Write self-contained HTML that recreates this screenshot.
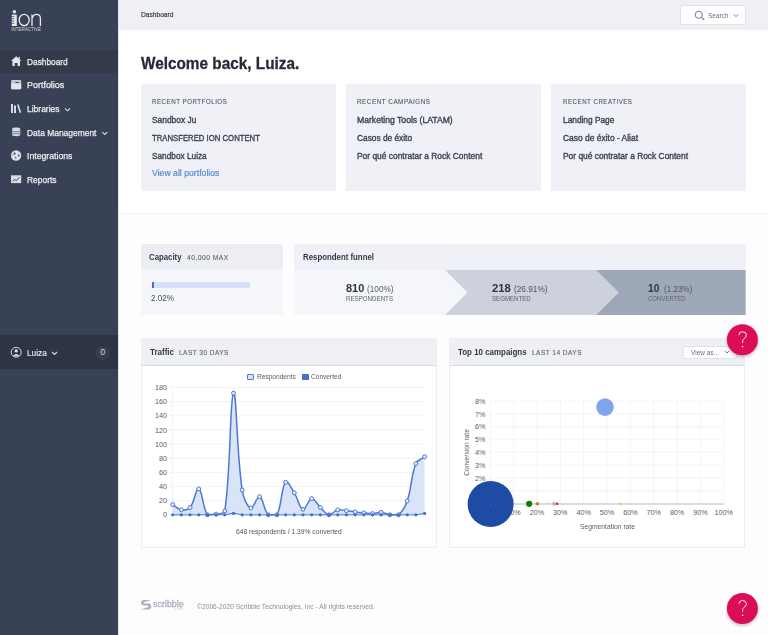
<!DOCTYPE html>
<html><head><meta charset="utf-8">
<style>
html,body{margin:0;padding:0;width:768px;height:635px;overflow:hidden;background:#fdfdfd;font-family:"Liberation Sans",sans-serif;}
.a{position:absolute;}
.t{position:absolute;white-space:nowrap;transform-origin:0 0;font-family:"Liberation Sans",sans-serif;}
svg{position:absolute;left:0;top:0;}
</style></head><body>
<!-- backgrounds -->
<div class="a" style="left:0;top:0;width:118px;height:635px;background:#384155"></div>
<div class="a" style="left:0;top:50px;width:118px;height:23px;background:#333b4b"></div>
<div class="a" style="left:0;top:335px;width:118px;height:34px;background:#2d3443"></div>
<div class="a" style="left:118px;top:0;width:1px;height:635px;background:#e3e5ea"></div>
<div class="a" style="left:119px;top:0;width:649px;height:30px;background:#eff0f4"></div>
<div class="a" style="left:119px;top:30px;width:649px;height:183px;background:#ffffff"></div>
<div class="a" style="left:119px;top:213px;width:649px;height:1px;background:#f3f4f7"></div>
<!-- search button -->
<div class="a" style="left:679.5px;top:5px;width:64.5px;height:18px;background:#fff;border:1px solid #dfe2e8;border-radius:2px"></div>
<!-- welcome cards -->
<div class="a" style="left:141px;top:84px;width:194.7px;height:107px;background:#f0f1f6"></div>
<div class="a" style="left:346px;top:84px;width:194.7px;height:107px;background:#f0f1f6"></div>
<div class="a" style="left:551px;top:84px;width:194.7px;height:107px;background:#f0f1f6"></div>
<!-- capacity -->
<div class="a" style="left:141px;top:244px;width:142px;height:26px;background:#eceef4"></div>
<div class="a" style="left:141px;top:270px;width:142px;height:45px;background:#f4f6f9"></div>
<div class="a" style="left:151.5px;top:282.2px;width:98.5px;height:5.8px;background:#d6e1f8"></div>
<div class="a" style="left:151.5px;top:282.2px;width:2.3px;height:5.8px;background:#4670cb"></div>
<!-- funnel -->
<div class="a" style="left:294.3px;top:244px;width:451.4px;height:26px;background:#f0f1f6"></div>
<svg width="768" height="635" viewBox="0 0 768 635">
<polygon points="294.3,270 445,270 467.5,292.5 445,315 294.3,315" fill="#f4f6f9"/>
<polygon points="445,270 596,270 618.5,292.5 596,315 445,315 467.5,292.5" fill="#ccd1dc"/>
<polygon points="596,270 745.7,270 745.7,315 596,315 618.5,292.5" fill="#9fa8b9"/>
</svg>
<!-- chart cards -->
<div class="a" style="left:140.6px;top:338px;width:294.2px;height:208.4px;border:1px solid #eceef2;background:#fff"></div>
<div class="a" style="left:140.6px;top:338px;width:296.2px;height:27px;background:#eef0f5;border-bottom:1px solid #d9dde6"></div>
<div class="a" style="left:448.6px;top:338px;width:294.4px;height:208.4px;border:1px solid #eceef2;background:#fff"></div>
<div class="a" style="left:448.6px;top:338px;width:296.4px;height:27px;background:#eef0f5;border-bottom:1px solid #d9dde6"></div>
<div class="a" style="left:683.4px;top:345.5px;width:52px;height:11px;background:#fff;border:1px solid #dfe2e8;border-radius:2px"></div>
<!-- legend boxes -->
<div class="a" style="left:247.2px;top:373.9px;width:4.8px;height:4.4px;border:1px solid #5079d0;background:#d8e3f8;border-radius:1px"></div>
<div class="a" style="left:302.3px;top:373.9px;width:6.5px;height:6.4px;background:#4a72c8"></div>
<svg width="768" height="635" viewBox="0 0 768 635">
<line x1="168.5" y1="387.50" x2="425.6" y2="387.50" stroke="#eef0f4" stroke-width="0.8"/>
<line x1="168.5" y1="401.65" x2="425.6" y2="401.65" stroke="#eef0f4" stroke-width="0.8"/>
<line x1="168.5" y1="415.80" x2="425.6" y2="415.80" stroke="#eef0f4" stroke-width="0.8"/>
<line x1="168.5" y1="429.95" x2="425.6" y2="429.95" stroke="#eef0f4" stroke-width="0.8"/>
<line x1="168.5" y1="444.10" x2="425.6" y2="444.10" stroke="#eef0f4" stroke-width="0.8"/>
<line x1="168.5" y1="458.25" x2="425.6" y2="458.25" stroke="#eef0f4" stroke-width="0.8"/>
<line x1="168.5" y1="472.40" x2="425.6" y2="472.40" stroke="#eef0f4" stroke-width="0.8"/>
<line x1="168.5" y1="486.55" x2="425.6" y2="486.55" stroke="#eef0f4" stroke-width="0.8"/>
<line x1="168.5" y1="500.70" x2="425.6" y2="500.70" stroke="#eef0f4" stroke-width="0.8"/>
<line x1="168.5" y1="514.85" x2="425.6" y2="514.85" stroke="#eef0f4" stroke-width="0.8"/>
<line x1="172.5" y1="385" x2="172.5" y2="514.8" stroke="#eef0f4" stroke-width="0.8"/>
<path d="M172.70,504.54 C176.17,506.66 177.70,509.23 181.39,509.85 C184.65,510.39 187.95,510.00 190.07,507.44 C194.90,501.63 195.78,487.64 198.76,488.91 C202.73,490.59 202.18,507.16 207.44,514.80 C209.13,514.80 212.76,514.80 216.13,514.09 C219.71,513.29 224.31,514.42 224.82,510.91 C231.26,466.03 229.69,397.69 233.50,393.11 C236.64,389.34 236.42,451.90 242.19,490.04 C243.37,497.86 246.82,506.46 250.88,508.01 C253.77,509.12 256.68,495.56 259.56,496.69 C263.63,498.28 263.40,509.74 268.25,514.80 C270.35,514.80 275.51,514.80 276.93,514.80 C282.46,504.45 280.68,488.49 285.62,482.25 C287.63,479.72 291.36,488.27 294.31,492.87 C298.31,499.11 299.00,508.02 302.99,509.35 C305.95,510.34 308.02,499.07 311.68,498.67 C314.96,498.31 316.75,504.09 320.37,507.44 C323.70,510.54 325.35,514.29 329.05,514.80 C332.30,514.80 334.03,510.72 337.74,509.85 C340.98,509.08 342.96,510.27 346.42,510.70 C349.91,511.12 351.63,511.53 355.11,511.97 C358.58,512.41 360.32,512.56 363.80,512.89 C367.27,513.21 369.02,513.71 372.48,513.60 C375.97,513.48 377.74,512.09 381.17,512.32 C384.69,512.57 386.31,514.30 389.86,514.80 C393.26,514.80 396.13,514.80 398.54,514.80 C403.08,511.18 405.15,507.06 407.23,500.93 C412.10,486.57 410.52,477.29 415.91,463.58 C417.47,459.63 421.13,459.50 424.60,456.78 L424.60,514.8 L172.70,514.8 Z" fill="#d5e1f8" fill-opacity="0.9"/>
<path d="M172.70,504.54 C176.17,506.66 177.70,509.23 181.39,509.85 C184.65,510.39 187.95,510.00 190.07,507.44 C194.90,501.63 195.78,487.64 198.76,488.91 C202.73,490.59 202.18,507.16 207.44,514.80 C209.13,514.80 212.76,514.80 216.13,514.09 C219.71,513.29 224.31,514.42 224.82,510.91 C231.26,466.03 229.69,397.69 233.50,393.11 C236.64,389.34 236.42,451.90 242.19,490.04 C243.37,497.86 246.82,506.46 250.88,508.01 C253.77,509.12 256.68,495.56 259.56,496.69 C263.63,498.28 263.40,509.74 268.25,514.80 C270.35,514.80 275.51,514.80 276.93,514.80 C282.46,504.45 280.68,488.49 285.62,482.25 C287.63,479.72 291.36,488.27 294.31,492.87 C298.31,499.11 299.00,508.02 302.99,509.35 C305.95,510.34 308.02,499.07 311.68,498.67 C314.96,498.31 316.75,504.09 320.37,507.44 C323.70,510.54 325.35,514.29 329.05,514.80 C332.30,514.80 334.03,510.72 337.74,509.85 C340.98,509.08 342.96,510.27 346.42,510.70 C349.91,511.12 351.63,511.53 355.11,511.97 C358.58,512.41 360.32,512.56 363.80,512.89 C367.27,513.21 369.02,513.71 372.48,513.60 C375.97,513.48 377.74,512.09 381.17,512.32 C384.69,512.57 386.31,514.30 389.86,514.80 C393.26,514.80 396.13,514.80 398.54,514.80 C403.08,511.18 405.15,507.06 407.23,500.93 C412.10,486.57 410.52,477.29 415.91,463.58 C417.47,459.63 421.13,459.50 424.60,456.78" fill="none" stroke="#4d78d2" stroke-width="1.5"/>
<circle cx="172.70" cy="504.54" r="1.95" fill="#e6edfb" stroke="#4d78d2" stroke-width="1"/>
<circle cx="181.39" cy="509.85" r="1.95" fill="#e6edfb" stroke="#4d78d2" stroke-width="1"/>
<circle cx="190.07" cy="507.44" r="1.95" fill="#e6edfb" stroke="#4d78d2" stroke-width="1"/>
<circle cx="198.76" cy="488.91" r="1.95" fill="#e6edfb" stroke="#4d78d2" stroke-width="1"/>
<circle cx="207.44" cy="514.80" r="1.95" fill="#e6edfb" stroke="#4d78d2" stroke-width="1"/>
<circle cx="216.13" cy="514.09" r="1.95" fill="#e6edfb" stroke="#4d78d2" stroke-width="1"/>
<circle cx="224.82" cy="510.91" r="1.95" fill="#e6edfb" stroke="#4d78d2" stroke-width="1"/>
<circle cx="233.50" cy="393.11" r="1.95" fill="#e6edfb" stroke="#4d78d2" stroke-width="1"/>
<circle cx="242.19" cy="490.04" r="1.95" fill="#e6edfb" stroke="#4d78d2" stroke-width="1"/>
<circle cx="250.88" cy="508.01" r="1.95" fill="#e6edfb" stroke="#4d78d2" stroke-width="1"/>
<circle cx="259.56" cy="496.69" r="1.95" fill="#e6edfb" stroke="#4d78d2" stroke-width="1"/>
<circle cx="268.25" cy="514.80" r="1.95" fill="#e6edfb" stroke="#4d78d2" stroke-width="1"/>
<circle cx="276.93" cy="514.80" r="1.95" fill="#e6edfb" stroke="#4d78d2" stroke-width="1"/>
<circle cx="285.62" cy="482.25" r="1.95" fill="#e6edfb" stroke="#4d78d2" stroke-width="1"/>
<circle cx="294.31" cy="492.87" r="1.95" fill="#e6edfb" stroke="#4d78d2" stroke-width="1"/>
<circle cx="302.99" cy="509.35" r="1.95" fill="#e6edfb" stroke="#4d78d2" stroke-width="1"/>
<circle cx="311.68" cy="498.67" r="1.95" fill="#e6edfb" stroke="#4d78d2" stroke-width="1"/>
<circle cx="320.37" cy="507.44" r="1.95" fill="#e6edfb" stroke="#4d78d2" stroke-width="1"/>
<circle cx="329.05" cy="514.80" r="1.95" fill="#e6edfb" stroke="#4d78d2" stroke-width="1"/>
<circle cx="337.74" cy="509.85" r="1.95" fill="#e6edfb" stroke="#4d78d2" stroke-width="1"/>
<circle cx="346.42" cy="510.70" r="1.95" fill="#e6edfb" stroke="#4d78d2" stroke-width="1"/>
<circle cx="355.11" cy="511.97" r="1.95" fill="#e6edfb" stroke="#4d78d2" stroke-width="1"/>
<circle cx="363.80" cy="512.89" r="1.95" fill="#e6edfb" stroke="#4d78d2" stroke-width="1"/>
<circle cx="372.48" cy="513.60" r="1.95" fill="#e6edfb" stroke="#4d78d2" stroke-width="1"/>
<circle cx="381.17" cy="512.32" r="1.95" fill="#e6edfb" stroke="#4d78d2" stroke-width="1"/>
<circle cx="389.86" cy="514.80" r="1.95" fill="#e6edfb" stroke="#4d78d2" stroke-width="1"/>
<circle cx="398.54" cy="514.80" r="1.95" fill="#e6edfb" stroke="#4d78d2" stroke-width="1"/>
<circle cx="407.23" cy="500.93" r="1.95" fill="#e6edfb" stroke="#4d78d2" stroke-width="1"/>
<circle cx="415.91" cy="463.58" r="1.95" fill="#e6edfb" stroke="#4d78d2" stroke-width="1"/>
<circle cx="424.60" cy="456.78" r="1.95" fill="#e6edfb" stroke="#4d78d2" stroke-width="1"/>
<path d="M172.70,514.80 C176.17,514.80 177.91,514.80 181.39,514.80 C184.86,514.80 186.60,514.80 190.07,514.80 C193.55,514.80 195.28,514.80 198.76,514.80 C202.23,514.80 203.97,514.80 207.44,514.80 C210.92,514.80 212.66,514.80 216.13,514.80 C219.61,514.80 221.37,514.80 224.82,514.80 C228.31,514.52 230.03,513.38 233.50,513.38 C236.98,513.38 238.69,514.52 242.19,514.80 C245.64,514.80 247.40,514.80 250.88,514.80 C254.35,514.80 256.09,514.80 259.56,514.80 C263.04,514.80 264.77,514.80 268.25,514.80 C271.72,514.80 273.46,514.80 276.93,514.80 C280.41,514.80 282.15,514.80 285.62,514.80 C289.10,514.80 290.83,514.80 294.31,514.80 C297.78,514.80 299.52,514.80 302.99,514.80 C306.47,514.80 308.20,514.80 311.68,514.80 C315.15,514.80 316.89,514.80 320.37,514.80 C323.84,514.80 325.58,514.80 329.05,514.80 C332.53,514.80 334.26,514.80 337.74,514.80 C341.21,514.80 342.95,514.80 346.42,514.80 C349.90,514.80 351.64,514.80 355.11,514.80 C358.58,514.80 360.32,514.80 363.80,514.80 C367.27,514.80 369.01,514.80 372.48,514.80 C375.96,514.80 377.69,514.80 381.17,514.80 C384.64,514.80 386.38,514.80 389.86,514.80 C393.33,514.80 395.07,514.80 398.54,514.80 C402.02,514.80 403.75,514.80 407.23,514.80 C410.70,514.80 412.46,514.80 415.91,514.80 C419.41,514.52 421.13,513.95 424.60,513.38" fill="none" stroke="#4a74cf" stroke-width="1"/>
<circle cx="172.70" cy="514.80" r="1.65" fill="#4570cc"/>
<circle cx="181.39" cy="514.80" r="1.65" fill="#4570cc"/>
<circle cx="190.07" cy="514.80" r="1.65" fill="#4570cc"/>
<circle cx="198.76" cy="514.80" r="1.65" fill="#4570cc"/>
<circle cx="207.44" cy="514.80" r="1.65" fill="#4570cc"/>
<circle cx="216.13" cy="514.80" r="1.65" fill="#4570cc"/>
<circle cx="224.82" cy="514.80" r="1.65" fill="#4570cc"/>
<circle cx="233.50" cy="513.38" r="1.65" fill="#4570cc"/>
<circle cx="242.19" cy="514.80" r="1.65" fill="#4570cc"/>
<circle cx="250.88" cy="514.80" r="1.65" fill="#4570cc"/>
<circle cx="259.56" cy="514.80" r="1.65" fill="#4570cc"/>
<circle cx="268.25" cy="514.80" r="1.65" fill="#4570cc"/>
<circle cx="276.93" cy="514.80" r="1.65" fill="#4570cc"/>
<circle cx="285.62" cy="514.80" r="1.65" fill="#4570cc"/>
<circle cx="294.31" cy="514.80" r="1.65" fill="#4570cc"/>
<circle cx="302.99" cy="514.80" r="1.65" fill="#4570cc"/>
<circle cx="311.68" cy="514.80" r="1.65" fill="#4570cc"/>
<circle cx="320.37" cy="514.80" r="1.65" fill="#4570cc"/>
<circle cx="329.05" cy="514.80" r="1.65" fill="#4570cc"/>
<circle cx="337.74" cy="514.80" r="1.65" fill="#4570cc"/>
<circle cx="346.42" cy="514.80" r="1.65" fill="#4570cc"/>
<circle cx="355.11" cy="514.80" r="1.65" fill="#4570cc"/>
<circle cx="363.80" cy="514.80" r="1.65" fill="#4570cc"/>
<circle cx="372.48" cy="514.80" r="1.65" fill="#4570cc"/>
<circle cx="381.17" cy="514.80" r="1.65" fill="#4570cc"/>
<circle cx="389.86" cy="514.80" r="1.65" fill="#4570cc"/>
<circle cx="398.54" cy="514.80" r="1.65" fill="#4570cc"/>
<circle cx="407.23" cy="514.80" r="1.65" fill="#4570cc"/>
<circle cx="415.91" cy="514.80" r="1.65" fill="#4570cc"/>
<circle cx="424.60" cy="513.38" r="1.65" fill="#4570cc"/>
<line x1="490.20" y1="490.80" x2="723.8" y2="490.80" stroke="#eef1f7" stroke-width="0.8"/>
<line x1="490.20" y1="478.00" x2="723.8" y2="478.00" stroke="#eef1f7" stroke-width="0.8"/>
<line x1="490.20" y1="465.20" x2="723.8" y2="465.20" stroke="#eef1f7" stroke-width="0.8"/>
<line x1="490.20" y1="452.40" x2="723.8" y2="452.40" stroke="#eef1f7" stroke-width="0.8"/>
<line x1="490.20" y1="439.60" x2="723.8" y2="439.60" stroke="#eef1f7" stroke-width="0.8"/>
<line x1="490.20" y1="426.80" x2="723.8" y2="426.80" stroke="#eef1f7" stroke-width="0.8"/>
<line x1="490.20" y1="414.00" x2="723.8" y2="414.00" stroke="#eef1f7" stroke-width="0.8"/>
<line x1="490.20" y1="401.20" x2="723.8" y2="401.20" stroke="#eef1f7" stroke-width="0.8"/>
<line x1="490.20" y1="401" x2="490.20" y2="503.6" stroke="#eef1f7" stroke-width="0.8"/>
<line x1="513.56" y1="401" x2="513.56" y2="503.6" stroke="#eef1f7" stroke-width="0.8"/>
<line x1="536.92" y1="401" x2="536.92" y2="503.6" stroke="#eef1f7" stroke-width="0.8"/>
<line x1="560.28" y1="401" x2="560.28" y2="503.6" stroke="#eef1f7" stroke-width="0.8"/>
<line x1="583.64" y1="401" x2="583.64" y2="503.6" stroke="#eef1f7" stroke-width="0.8"/>
<line x1="607.00" y1="401" x2="607.00" y2="503.6" stroke="#eef1f7" stroke-width="0.8"/>
<line x1="630.36" y1="401" x2="630.36" y2="503.6" stroke="#eef1f7" stroke-width="0.8"/>
<line x1="653.72" y1="401" x2="653.72" y2="503.6" stroke="#eef1f7" stroke-width="0.8"/>
<line x1="677.08" y1="401" x2="677.08" y2="503.6" stroke="#eef1f7" stroke-width="0.8"/>
<line x1="700.44" y1="401" x2="700.44" y2="503.6" stroke="#eef1f7" stroke-width="0.8"/>
<line x1="723.80" y1="401" x2="723.80" y2="503.6" stroke="#eef1f7" stroke-width="0.8"/>
<line x1="490.2" y1="504.0" x2="723.8" y2="504.0" stroke="#b4bac6" stroke-width="1"/>
<!-- search icon & chevrons -->
<circle cx="698.8" cy="14.8" r="3.6" fill="none" stroke="#6f7890" stroke-width="1"/>
<line x1="701.4" y1="17.4" x2="704.2" y2="20.2" stroke="#6f7890" stroke-width="1.1"/>
<polyline points="733.5,14.2 736,16.6 738.5,14.2" fill="none" stroke="#6f7890" stroke-width="0.9"/>
<polyline points="724.8,350.8 727,353 729.2,350.8" fill="none" stroke="#6b707b" stroke-width="0.9"/>
<!-- sidebar chevrons -->
<polyline points="65,108.4 67.5,110.8 70,108.4" fill="none" stroke="#d9dce3" stroke-width="1.15"/>
<polyline points="102.3,132.1 104.8,134.5 107.3,132.1" fill="none" stroke="#d9dce3" stroke-width="1.15"/>
<polyline points="52,352 54.5,354.5 57,352" fill="none" stroke="#d9dce3" stroke-width="1.15"/>
<!-- badge -->
<circle cx="102.5" cy="353" r="7" fill="#373f4f"/>
<!-- user icon -->
<circle cx="16.2" cy="352.3" r="5" fill="none" stroke="#d9dce2" stroke-width="1"/>
<circle cx="16.2" cy="350.9" r="1.7" fill="#d9dce2"/>
<path d="M13.2,355.6 Q16.2,352.4 19.2,355.6 L18.6,356.3 L13.8,356.3 Z" fill="#d9dce2"/>
<!-- nav icons -->
<path d="M16.2,56.2 L21.3,61 L20,61 L20,66 L17.6,66 L17.6,63 L14.8,63 L14.8,66 L12.4,66 L12.4,61 L11,61 Z" fill="#e2e5ea"/>
<rect x="18.6" y="56.8" width="1.3" height="2.6" fill="#e2e5ea"/>
<path d="M12.2,80 L20.2,80 Q21.2,80 21.2,81 L21.2,88.2 Q21.2,89.3 20.2,89.3 L12.2,89.3 Q11.1,89.3 11.1,88.2 L11.1,81 Q11.1,80 12.2,80 Z" fill="#c3c8d0"/>
<ellipse cx="17.2" cy="82.5" rx="2.2" ry="0.6" fill="#384155"/>
<path d="M11.1,83.4 L21.2,83.8 L21.2,88.2 Q21.2,89.3 20.2,89.3 L12.2,89.3 Q11.1,89.3 11.1,88.2 Z" fill="#e1e4e9"/>
<rect x="11" y="104" width="2" height="9" fill="#d9dce2"/>
<rect x="14" y="105.5" width="2" height="7.5" fill="#d9dce2"/>
<path d="M17,104.8 L18.6,104.3 L21.3,112.4 L19.7,113 Z" fill="#d9dce2"/>
<ellipse cx="16.2" cy="128.8" rx="4.1" ry="1.3" fill="#d9dce2"/>
<path d="M12.1,129.6 L20.3,129.6 L20.3,135.2 Q16.2,137.4 12.1,135.2 Z" fill="#d9dce2"/>
<line x1="12.1" y1="131.6" x2="20.3" y2="131.6" stroke="#384155" stroke-width="0.6"/>
<line x1="12.1" y1="133.7" x2="20.3" y2="133.7" stroke="#384155" stroke-width="0.6"/>
<circle cx="16.05" cy="155.5" r="5.2" fill="#dfe2e8"/>
<circle cx="14.6" cy="153.6" r="1.1" fill="#4a5365"/>
<circle cx="18.8" cy="155.4" r="1" fill="#4a5365"/>
<circle cx="15.6" cy="157.6" r="0.9" fill="#5a6375"/>
<path d="M11.3,155 L13.6,155" stroke="#5a6375" stroke-width="0.6"/>
<rect x="11" y="175.3" width="10.2" height="7.8" fill="#d9dce2"/>
<polyline points="12.6,181.4 14.6,179.6 16.4,180.6 19.4,177.2" fill="none" stroke="#384155" stroke-width="0.9"/>
<!-- logo -->
<circle cx="14.4" cy="11.8" r="1.8" fill="#e8eaee"/>
<rect x="11.8" y="14.6" width="5" height="11.4" fill="#e8eaee"/>
<rect x="11.8" y="16.2" width="2.6" height="0.7" fill="#384155"/>
<rect x="11.8" y="18.4" width="2.6" height="0.7" fill="#384155"/>
<rect x="11.8" y="20.6" width="2.6" height="0.7" fill="#384155"/>
<rect x="11.8" y="22.8" width="2.6" height="0.7" fill="#384155"/>
<ellipse cx="24.2" cy="20" rx="5" ry="5.6" fill="none" stroke="#e8eaee" stroke-width="1.3"/>
<path d="M32,26 L32,14.4 M32,18.6 Q33.2,14.3 36.6,14.3 Q40.4,14.3 40.4,18.6 L40.4,26" fill="none" stroke="#e8eaee" stroke-width="1.3"/>
<text x="11.3" y="31" font-family="Liberation Sans" font-size="4.6" fill="#d0d4dc" textLength="29.7" lengthAdjust="spacingAndGlyphs">INTERACTIVE</text>
</svg>
<span class="t" style="left:26.50px;top:57.80px;font-size:9.2px;line-height:9.2px;color:#eef0f4;transform:scaleX(0.905);-webkit-text-stroke:0.25px #eef0f4;">Dashboard</span>
<span class="t" style="left:26.50px;top:81.40px;font-size:9.2px;line-height:9.2px;color:#eef0f4;transform:scaleX(0.974);-webkit-text-stroke:0.25px #eef0f4;">Portfolios</span>
<span class="t" style="left:26.50px;top:105.00px;font-size:9.2px;line-height:9.2px;color:#eef0f4;transform:scaleX(0.922);-webkit-text-stroke:0.25px #eef0f4;">Libraries</span>
<span class="t" style="left:26.50px;top:128.60px;font-size:9.2px;line-height:9.2px;color:#eef0f4;transform:scaleX(0.919);-webkit-text-stroke:0.25px #eef0f4;">Data Management</span>
<span class="t" style="left:26.50px;top:152.20px;font-size:9.2px;line-height:9.2px;color:#eef0f4;transform:scaleX(0.946);-webkit-text-stroke:0.25px #eef0f4;">Integrations</span>
<span class="t" style="left:26.50px;top:175.80px;font-size:9.2px;line-height:9.2px;color:#eef0f4;transform:scaleX(0.917);-webkit-text-stroke:0.25px #eef0f4;">Reports</span>
<span class="t" style="left:26.60px;top:348.80px;font-size:9.2px;line-height:9.2px;color:#eef0f4;transform:scaleX(0.901);-webkit-text-stroke:0.12px #eef0f4;">Luiza</span>
<span class="t" style="left:100.30px;top:348.20px;font-size:8.8px;line-height:8.8px;color:#d3d8e0;">0</span>
<span class="t" style="left:140.70px;top:11.40px;font-size:7.4px;line-height:7.4px;color:#353942;transform:scaleX(0.896);-webkit-text-stroke:0.2px #353942;">Dashboard</span>
<span class="t" style="left:707.60px;top:11.60px;font-size:7.6px;line-height:7.6px;color:#676c77;transform:scaleX(0.848);">Search</span>
<span class="t" style="left:140.70px;top:55.50px;font-size:16.6px;line-height:16.6px;color:#262b37;font-weight:bold;transform:scaleX(0.924);-webkit-text-stroke:0.3px #262b37;">Welcome back, Luiza.</span>
<span class="t" style="left:151.80px;top:98.10px;font-size:7.3px;line-height:7.3px;color:#4f5461;letter-spacing:0.6px;transform:scaleX(0.846);-webkit-text-stroke:0.1px #4f5461;">RECENT PORTFOLIOS</span>
<span class="t" style="left:151.80px;top:115.70px;font-size:9.0px;line-height:9.0px;color:#3b404c;transform:scaleX(0.932);-webkit-text-stroke:0.35px #3b404c;">Sandbox Ju</span>
<span class="t" style="left:151.80px;top:133.70px;font-size:9.0px;line-height:9.0px;color:#3b404c;transform:scaleX(0.860);-webkit-text-stroke:0.35px #3b404c;">TRANSFERED ION CONTENT</span>
<span class="t" style="left:151.80px;top:151.70px;font-size:9.0px;line-height:9.0px;color:#3b404c;transform:scaleX(0.919);-webkit-text-stroke:0.35px #3b404c;">Sandbox Luiza</span>
<span class="t" style="left:357.30px;top:98.10px;font-size:7.3px;line-height:7.3px;color:#4f5461;letter-spacing:0.6px;transform:scaleX(0.867);-webkit-text-stroke:0.1px #4f5461;">RECENT CAMPAIGNS</span>
<span class="t" style="left:357.30px;top:115.70px;font-size:9.0px;line-height:9.0px;color:#3b404c;transform:scaleX(0.957);-webkit-text-stroke:0.35px #3b404c;">Marketing Tools (LATAM)</span>
<span class="t" style="left:357.30px;top:133.70px;font-size:9.0px;line-height:9.0px;color:#3b404c;transform:scaleX(0.924);-webkit-text-stroke:0.35px #3b404c;">Casos de éxito</span>
<span class="t" style="left:357.30px;top:151.70px;font-size:9.0px;line-height:9.0px;color:#3b404c;transform:scaleX(0.934);-webkit-text-stroke:0.35px #3b404c;">Por qué contratar a Rock Content</span>
<span class="t" style="left:562.80px;top:98.10px;font-size:7.3px;line-height:7.3px;color:#4f5461;letter-spacing:0.6px;transform:scaleX(0.844);-webkit-text-stroke:0.1px #4f5461;">RECENT CREATIVES</span>
<span class="t" style="left:562.80px;top:115.70px;font-size:9.0px;line-height:9.0px;color:#3b404c;transform:scaleX(0.925);-webkit-text-stroke:0.35px #3b404c;">Landing Page</span>
<span class="t" style="left:562.80px;top:133.70px;font-size:9.0px;line-height:9.0px;color:#3b404c;transform:scaleX(0.937);-webkit-text-stroke:0.35px #3b404c;">Caso de éxito - Aliat</span>
<span class="t" style="left:562.80px;top:151.70px;font-size:9.0px;line-height:9.0px;color:#3b404c;transform:scaleX(0.932);-webkit-text-stroke:0.35px #3b404c;">Por qué contratar a Rock Content</span>
<span class="t" style="left:152.40px;top:169.10px;font-size:9.0px;line-height:9.0px;color:#5a89d6;transform:scaleX(0.965);-webkit-text-stroke:0.2px #5a89d6;">View all portfolios</span>
<span class="t" style="left:148.90px;top:252.90px;font-size:8.6px;line-height:8.6px;color:#333845;font-weight:bold;transform:scaleX(0.907);">Capacity</span>
<span class="t" style="left:187.00px;top:253.90px;font-size:7.6px;line-height:7.6px;color:#5a5f6b;letter-spacing:0.5px;transform:scaleX(0.892);-webkit-text-stroke:0.1px #5a5f6b;">40,000 MAX</span>
<span class="t" style="left:150.60px;top:293.90px;font-size:9.2px;line-height:9.2px;color:#4a4f5a;transform:scaleX(0.882);">2.02%</span>
<span class="t" style="left:303.40px;top:252.60px;font-size:8.6px;line-height:8.6px;color:#333845;font-weight:bold;transform:scaleX(0.912);">Respondent funnel</span>
<span class="t" style="left:345.60px;top:282.20px;font-size:11.6px;line-height:11.6px;color:#2f3440;font-weight:bold;transform:scaleX(0.946);">810</span>
<span class="t" style="left:367.20px;top:285.20px;font-size:9.0px;line-height:9.0px;color:#5d6270;transform:scaleX(0.917);">(100%)</span>
<span class="t" style="left:345.60px;top:295.40px;font-size:7.0px;line-height:7.0px;color:#5d6270;transform:scaleX(0.882);">RESPONDENTS</span>
<span class="t" style="left:492.00px;top:282.20px;font-size:11.6px;line-height:11.6px;color:#2f3440;font-weight:bold;transform:scaleX(0.972);">218</span>
<span class="t" style="left:514.00px;top:285.20px;font-size:9.0px;line-height:9.0px;color:#4f5462;transform:scaleX(0.917);">(26.91%)</span>
<span class="t" style="left:492.00px;top:295.40px;font-size:7.0px;line-height:7.0px;color:#5d6270;transform:scaleX(0.875);">SEGMENTED</span>
<span class="t" style="left:648.30px;top:282.20px;font-size:11.6px;line-height:11.6px;color:#2f3440;font-weight:bold;transform:scaleX(0.876);">10</span>
<span class="t" style="left:663.75px;top:285.20px;font-size:9.0px;line-height:9.0px;color:#4f5462;transform:scaleX(0.895);">(1.23%)</span>
<span class="t" style="left:648.30px;top:295.40px;font-size:7.0px;line-height:7.0px;color:#5d6270;transform:scaleX(0.860);">CONVERTED</span>
<span class="t" style="left:150.20px;top:347.60px;font-size:8.6px;line-height:8.6px;color:#333845;font-weight:bold;transform:scaleX(0.930);">Traffic</span>
<span class="t" style="left:179.30px;top:348.60px;font-size:7.6px;line-height:7.6px;color:#5a5f6b;letter-spacing:0.5px;transform:scaleX(0.865);-webkit-text-stroke:0.1px #5a5f6b;">LAST 30 DAYS</span>
<span class="t" style="left:256.90px;top:373.40px;font-size:7.2px;line-height:7.2px;color:#555a64;transform:scaleX(0.914);">Respondents</span>
<span class="t" style="left:311.30px;top:373.40px;font-size:7.2px;line-height:7.2px;color:#555a64;transform:scaleX(0.916);">Converted</span>
<span class="t" style="left:155.00px;top:384.10px;font-size:7.2px;line-height:7.2px;color:#585d68;">180</span>
<span class="t" style="left:155.00px;top:398.25px;font-size:7.2px;line-height:7.2px;color:#585d68;">160</span>
<span class="t" style="left:155.00px;top:412.40px;font-size:7.2px;line-height:7.2px;color:#585d68;">140</span>
<span class="t" style="left:155.00px;top:426.55px;font-size:7.2px;line-height:7.2px;color:#585d68;">120</span>
<span class="t" style="left:155.00px;top:440.70px;font-size:7.2px;line-height:7.2px;color:#585d68;">100</span>
<span class="t" style="left:159.00px;top:454.85px;font-size:7.2px;line-height:7.2px;color:#585d68;">80</span>
<span class="t" style="left:159.00px;top:469.00px;font-size:7.2px;line-height:7.2px;color:#585d68;">60</span>
<span class="t" style="left:159.00px;top:483.15px;font-size:7.2px;line-height:7.2px;color:#585d68;">40</span>
<span class="t" style="left:159.00px;top:497.30px;font-size:7.2px;line-height:7.2px;color:#585d68;">20</span>
<span class="t" style="left:163.00px;top:511.45px;font-size:7.2px;line-height:7.2px;color:#585d68;">0</span>
<span class="t" style="left:235.80px;top:527.80px;font-size:7.2px;line-height:7.2px;color:#4f5460;transform:scaleX(0.932);">648 respondents / 1.39% converted</span>
<span class="t" style="left:458.30px;top:347.60px;font-size:8.6px;line-height:8.6px;color:#333845;font-weight:bold;transform:scaleX(0.923);">Top 10 campaigns</span>
<span class="t" style="left:532.00px;top:348.60px;font-size:7.6px;line-height:7.6px;color:#5a5f6b;letter-spacing:0.5px;transform:scaleX(0.868);-webkit-text-stroke:0.1px #5a5f6b;">LAST 14 DAYS</span>
<span class="t" style="left:691.00px;top:348.70px;font-size:7.6px;line-height:7.6px;color:#6b707b;transform:scaleX(0.854);">View as...</span>
<span class="t" style="left:474.91px;top:474.60px;font-size:7.2px;line-height:7.2px;color:#585d68;">2%</span>
<span class="t" style="left:474.91px;top:461.80px;font-size:7.2px;line-height:7.2px;color:#585d68;">3%</span>
<span class="t" style="left:474.91px;top:449.00px;font-size:7.2px;line-height:7.2px;color:#585d68;">4%</span>
<span class="t" style="left:474.91px;top:436.20px;font-size:7.2px;line-height:7.2px;color:#585d68;">5%</span>
<span class="t" style="left:474.91px;top:423.40px;font-size:7.2px;line-height:7.2px;color:#585d68;">6%</span>
<span class="t" style="left:474.91px;top:410.60px;font-size:7.2px;line-height:7.2px;color:#585d68;">7%</span>
<span class="t" style="left:474.91px;top:397.80px;font-size:7.2px;line-height:7.2px;color:#585d68;">8%</span>
<span class="t" style="left:485.00px;top:509.20px;font-size:7.2px;line-height:7.2px;color:#585d68;">0%</span>
<span class="t" style="left:506.36px;top:509.20px;font-size:7.2px;line-height:7.2px;color:#585d68;">10%</span>
<span class="t" style="left:529.72px;top:509.20px;font-size:7.2px;line-height:7.2px;color:#585d68;">20%</span>
<span class="t" style="left:553.08px;top:509.20px;font-size:7.2px;line-height:7.2px;color:#585d68;">30%</span>
<span class="t" style="left:576.44px;top:509.20px;font-size:7.2px;line-height:7.2px;color:#585d68;">40%</span>
<span class="t" style="left:599.80px;top:509.20px;font-size:7.2px;line-height:7.2px;color:#585d68;">50%</span>
<span class="t" style="left:623.16px;top:509.20px;font-size:7.2px;line-height:7.2px;color:#585d68;">60%</span>
<span class="t" style="left:646.52px;top:509.20px;font-size:7.2px;line-height:7.2px;color:#585d68;">70%</span>
<span class="t" style="left:669.88px;top:509.20px;font-size:7.2px;line-height:7.2px;color:#585d68;">80%</span>
<span class="t" style="left:693.24px;top:509.20px;font-size:7.2px;line-height:7.2px;color:#585d68;">90%</span>
<span class="t" style="left:714.60px;top:509.20px;font-size:7.2px;line-height:7.2px;color:#585d68;">100%</span>
<span class="t" style="left:580.00px;top:523.20px;font-size:7.2px;line-height:7.2px;color:#585d68;transform:scaleX(0.936);">Segmentation rate</span>
<span class="t" style="left:196.80px;top:603.80px;font-size:6.8px;line-height:6.8px;color:#8a8f99;transform:scaleX(0.986);">©2006-2020 Scribble Technologies, Inc - All rights reserved.</span>
<svg width="768" height="635" viewBox="0 0 768 635">
<text transform="translate(468.8,475.8) rotate(-90)" font-family="Liberation Sans" font-size="7.4" fill="#606570" textLength="46.6" lengthAdjust="spacingAndGlyphs">Conversion rate</text>
<!-- bubbles -->
<circle cx="490.6" cy="504" r="23" fill="#1e4ba4"/>
<circle cx="490.6" cy="504" r="0.6" fill="#8aa0c8"/>
<circle cx="529.2" cy="503.8" r="3.1" fill="#107c10"/>
<circle cx="537.4" cy="503.8" r="1.7" fill="#c67a35"/>
<circle cx="548.4" cy="503.8" r="1" fill="#f0b8c8"/>
<circle cx="554" cy="503.8" r="2" fill="#a9c6ac"/>
<circle cx="557.1" cy="503.8" r="1.3" fill="#d3145a"/>
<circle cx="620.3" cy="503.8" r="1.5" fill="#f2c38a"/>
<circle cx="605" cy="407.1" r="8.8" fill="#80a4ec"/>
<!-- help buttons -->
<defs><filter id="sh" x="-50%" y="-50%" width="200%" height="200%"><feDropShadow dx="0" dy="1.5" stdDeviation="1.5" flood-color="#000" flood-opacity="0.25"/></filter></defs>
<circle cx="742.4" cy="339.8" r="15.5" fill="#dc0b58" filter="url(#sh)"/>
<circle cx="742.4" cy="608.5" r="15.5" fill="#dc0b58" filter="url(#sh)"/>
<path d="M738.8,335.2 Q738.8,331.8 742.6,331.8 Q746.4,331.8 746.4,335.2 Q746.4,337.4 744,338.6 Q742.6,339.4 742.6,341.6 L742.6,343" fill="none" stroke="#fff" stroke-width="0.9"/>
<circle cx="742.6" cy="346.6" r="0.8" fill="#fff"/>
<path d="M738.8,603.9 Q738.8,600.5 742.6,600.5 Q746.4,600.5 746.4,603.9 Q746.4,606.1 744,607.3 Q742.6,608.1 742.6,610.3 L742.6,611.7" fill="none" stroke="#fff" stroke-width="0.9"/>
<circle cx="742.6" cy="615.3" r="0.8" fill="#fff"/>
<!-- scribble logo -->
<path d="M151.2,600 L144.2,600 Q141,600 141,603 Q141,605.4 144,605.4 L147.4,605.4 Q148.6,605.4 148.6,606.4 Q148.6,607.3 147.4,607.3 L140.8,609.6 L147.6,609.6 Q151.2,609.6 151.2,606.2 Q151.2,603.6 148,603.6 L144.6,603.6 Q143.6,603.6 143.6,602.8 Q143.6,602 144.6,602 Z" fill="#a9b0be"/>
</svg>
<span class="t" style="left:152.8px;top:598.6px;font-size:9.6px;line-height:9.6px;color:#a9b0be;transform:scaleX(0.93);-webkit-text-stroke:0.3px #a9b0be">scribble</span>
<span class="t" style="left:174.3px;top:607.8px;font-size:3.2px;line-height:3.2px;color:#b9bec8;letter-spacing:0.4px">LIVE</span>
</body></html>
